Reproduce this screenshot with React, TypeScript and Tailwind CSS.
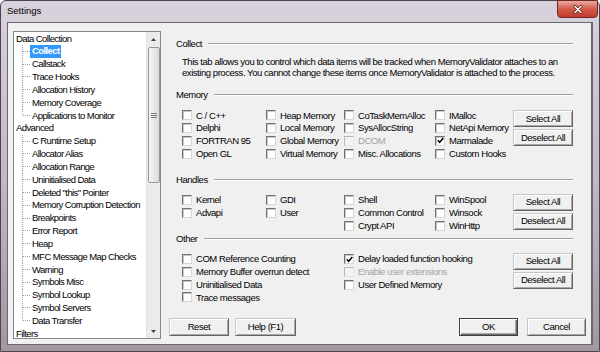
import React from "react";

type Item = { label: string; checked?: boolean; disabled?: boolean };

function Box({ checked, disabled }: { checked?: boolean; disabled?: boolean }) {
  return (
    <span
      className={
        disabled
          ? "flex h-[10px] w-[10px] shrink-0 items-center justify-center border border-t-[#b9b9b9] border-l-[#b9b9b9] border-r-[#e4e4e4] border-b-[#e4e4e4] bg-[#f4f4f4]"
          : "flex h-[10px] w-[10px] shrink-0 items-center justify-center border border-t-[#707070] border-l-[#707070] border-r-[#d6d6d6] border-b-[#d6d6d6] bg-white shadow-[inset_1px_1px_0_#c8c8c8]"
      }
    >
      {checked && (
        <svg width="7" height="7" viewBox="0 0 7 7">
          <path d="M0.8 3.2 L2.7 5.3 L6.3 1" fill="none" stroke="#000" strokeWidth="1.5" />
        </svg>
      )}
    </span>
  );
}

function Check({ item, tall }: { item: Item; tall?: boolean }) {
  return (
    <div className={tall ? "flex h-[13px] items-center" : "flex h-[12.8px] items-center"}>
      <Box checked={item.checked} disabled={item.disabled} />
      <span className={item.disabled ? "ml-[4px] whitespace-nowrap text-[#a3a3a3]" : "ml-[4px] whitespace-nowrap"}>
        {item.label}
      </span>
    </div>
  );
}

function Btn({ children, wide, tall, def }: { children: React.ReactNode; wide?: string; tall?: boolean; def?: boolean }) {
  const base = def
    ? "flex shrink-0 items-center justify-center bg-[#f0f0f0] border border-[#3f3f3f] shadow-[inset_1px_1px_0_#ffffff,inset_-1px_-1px_0_#6a6a6a,inset_-2px_-2px_0_#a8a8a8]"
    : "flex shrink-0 items-center justify-center bg-[#f0f0f0] border border-t-[#c6c6c6] border-l-[#c6c6c6] border-r-[#646464] border-b-[#646464] shadow-[inset_1px_1px_0_#ffffff,inset_-1px_-1px_0_#a8a8a8]";
  return (
    <div className={base + " " + (wide ?? "w-[60px]") + " " + (tall ? "h-[18px]" : "h-[17px]")}>
      {children}
    </div>
  );
}

function Header({ label }: { label: string }) {
  return (
    <div className="flex h-[12px] items-center pl-[8px] pr-[13px]">
      <span className="whitespace-nowrap">{label}</span>
      <div className="ml-[6px] h-[2px] flex-1 border-t border-b border-t-[#a0a0a0] border-b-white" />
    </div>
  );
}

function Col({ items, w, tall }: { items: Item[]; w: string; tall?: boolean }) {
  return (
    <div className={"flex shrink-0 flex-col " + w}>
      {items.map((it) => (
        <Check key={it.label} item={it} tall={tall} />
      ))}
    </div>
  );
}

function SideButtons() {
  return (
    <div className="flex w-[60px] shrink-0 flex-col gap-[2px]">
      <Btn>Select All</Btn>
      <Btn>Deselect All</Btn>
    </div>
  );
}

const tree: { label: string; children: string[] }[] = [
  {
    label: "Data Collection",
    children: ["Collect", "Callstack", "Trace Hooks", "Allocation History", "Memory Coverage", "Applications to Monitor"],
  },
  {
    label: "Advanced",
    children: [
      "C Runtime Setup",
      "Allocator Alias",
      "Allocation Range",
      "Uninitialised Data",
      'Deleted "this" Pointer',
      "Memory Corruption Detection",
      "Breakpoints",
      "Error Report",
      "Heap",
      "MFC Message Map Checks",
      "Warning",
      "Symbols Misc",
      "Symbol Lookup",
      "Symbol Servers",
      "Data Transfer",
    ],
  },
  { label: "Filters", children: [] },
];

function Conn({ last }: { last: boolean }) {
  return (
    <svg width="16" height="12.83" viewBox="0 0 16 12.83" className="shrink-0">
      <line x1="8.5" y1="0" x2="8.5" y2={last ? 6.5 : 12.83} stroke="#a0a0a0" strokeDasharray="1 1" />
      <line x1="9" y1="6.5" x2="16" y2="6.5" stroke="#a0a0a0" strokeDasharray="1 1" />
    </svg>
  );
}

function Tree() {
  return (
    <div className="ml-[5px] mt-[8px] flex h-[308px] w-[148px] shrink-0 border border-[#828790] bg-white tracking-[-0.6px]">
      <div className="min-w-0 flex-1 overflow-hidden">
        {tree.map((g) => (
          <div key={g.label}>
            <div className="flex h-[12.83px] items-center pl-[2px] whitespace-nowrap">{g.label}</div>
            {g.children.map((c, i) => (
              <div key={c} className="flex h-[12.83px] items-stretch whitespace-nowrap">
                <Conn last={i === g.children.length - 1} />
                {c === "Collect" ? (
                  <span className="flex items-center bg-[#3399ff] px-[2px] font-bold text-white">{c}</span>
                ) : (
                  <span className="flex items-center px-[2px]">{c}</span>
                )}
              </div>
            ))}
          </div>
        ))}
      </div>
      <div className="flex w-[14px] shrink-0 flex-col border-l border-l-[#e2e2e2] bg-[#ebebeb]">
        <div className="flex h-[14px] items-center justify-center">
          <svg width="5" height="3" viewBox="0 0 5 3">
            <path d="M0 3 L2.5 0 L5 3 Z" fill="#404040" />
          </svg>
        </div>
        <div className="mx-[0.5px] mt-[1px] flex h-[136px] items-center justify-center rounded-[2px] border border-[#979797] bg-gradient-to-r from-[#f6f6f6] to-[#dadada]">
          <div className="flex flex-col gap-[1px]">
            <div className="h-[1px] w-[6px] bg-[#7a7a7a]" />
            <div className="h-[1px] w-[6px] bg-[#7a7a7a]" />
            <div className="h-[1px] w-[6px] bg-[#7a7a7a]" />
          </div>
        </div>
        <div className="flex-1" />
        <div className="flex h-[14px] items-center justify-center">
          <svg width="5" height="3" viewBox="0 0 5 3">
            <path d="M0 0 L2.5 3 L5 0 Z" fill="#404040" />
          </svg>
        </div>
      </div>
    </div>
  );
}

export default function App() {
  return (
    <div className="h-[352px] w-[600px] overflow-hidden bg-white font-['Liberation_Sans',Arial,sans-serif] text-[9.5px] leading-none text-black">
      <div className="flex h-[352px] w-[600px] flex-col rounded-t-[6px] border border-[#4a4550] bg-gradient-to-b from-[#d9d2dc] via-[#c2b8c6] to-[#a3979f] px-[6px] pb-[6px]">
        <div className="flex h-[21px] shrink-0 items-start justify-between">
          <span className="mt-[5px] text-[9.5px]">Settings</span>
          <div className="-mr-[5px] -mt-[1px] flex h-[18px] w-[41px] items-center justify-center rounded-b-[4px] border border-[#6e2a22] bg-gradient-to-b from-[#eaa89e] via-[#d35a4a] to-[#bf3a2c]">
            <svg width="10" height="9" viewBox="0 0 10 9">
              <path d="M2 1.5 L8 7.5 M8 1.5 L2 7.5" stroke="#5a1a14" strokeWidth="3" strokeLinecap="round" />
              <path d="M2 1.5 L8 7.5 M8 1.5 L2 7.5" stroke="#ffffff" strokeWidth="1.6" strokeLinecap="round" />
            </svg>
          </div>
        </div>
        <div className="flex min-h-0 flex-1 border border-r-2 border-[#6b6670] bg-[#f0f0f0]">
          <Tree />
          <div className="ml-[7px] flex w-[418px] shrink-0 flex-col overflow-hidden pt-[15px] tracking-[-0.45px]">
            <Header label="Collect" />
            <div className="mt-[6px] pl-[14px] leading-[11px] whitespace-nowrap">
              This tab allows you to control which data items will be tracked when MemoryValidator attaches to an
              <br />
              existing process. You cannot change these items once MemoryValidator is attached to the process.
            </div>

            <div className="mt-[11px]">
              <Header label="Memory" />
            </div>
            <div className="mt-[8px] flex pl-[14px]">
              <Col
                w="w-[84px]"
                items={[{ label: "C / C++" }, { label: "Delphi" }, { label: "FORTRAN 95" }, { label: "Open GL" }]}
              />
              <Col
                w="w-[78px]"
                items={[{ label: "Heap Memory" }, { label: "Local Memory" }, { label: "Global Memory" }, { label: "Virtual Memory" }]}
              />
              <Col
                w="w-[91px]"
                items={[
                  { label: "CoTaskMemAlloc" },
                  { label: "SysAllocString" },
                  { label: "DCOM", disabled: true },
                  { label: "Misc. Allocations" },
                ]}
              />
              <Col
                w="w-[78px]"
                items={[{ label: "IMalloc" }, { label: "NetApi Memory" }, { label: "Marmalade", checked: true }, { label: "Custom Hooks" }]}
              />
              <div className="mt-[1px]">
                <SideButtons />
              </div>
            </div>

            <div className="mt-[14px]">
              <Header label="Handles" />
            </div>
            <div className="mt-[7.5px] flex pl-[14px]">
              <Col tall w="w-[84px]" items={[{ label: "Kernel" }, { label: "Advapi" }]} />
              <Col tall w="w-[78px]" items={[{ label: "GDI" }, { label: "User" }]} />
              <Col tall w="w-[91px]" items={[{ label: "Shell" }, { label: "Common Control" }, { label: "Crypt API" }]} />
              <Col tall w="w-[78px]" items={[{ label: "WinSpool" }, { label: "Winsock" }, { label: "WinHttp" }]} />
              <SideButtons />
            </div>

            <Header label="Other" />
            <div className="mt-[8px] flex pl-[14px]">
              <Col
                w="w-[162px]"
                items={[
                  { label: "COM Reference Counting" },
                  { label: "Memory Buffer overrun detect" },
                  { label: "Uninitialised Data" },
                  { label: "Trace messages" },
                ]}
              />
              <Col
                w="w-[169px]"
                items={[
                  { label: "Delay loaded function hooking", checked: true },
                  { label: "Enable user extensions", disabled: true },
                  { label: "User Defined Memory" },
                ]}
              />
              <SideButtons />
            </div>

            <div className="mt-[14px] flex pl-[1px]">
              <Btn tall>Reset</Btn>
              <div className="w-[6px]" />
              <Btn tall wide="w-[61px]">Help (F1)</Btn>
              <div className="flex-1" />
              <Btn tall def wide="w-[59px]">OK</Btn>
              <div className="w-[9px]" />
              <Btn tall wide="w-[59px]">Cancel</Btn>
            </div>
          </div>
        </div>
      </div>
    </div>
  );
}
